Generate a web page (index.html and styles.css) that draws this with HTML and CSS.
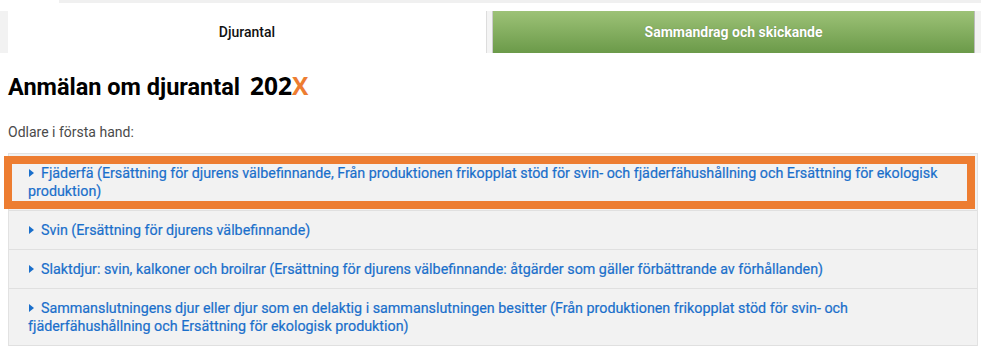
FILE: index.html
```html
<!DOCTYPE html>
<html lang="sv">
<head>
    <meta charset="UTF-8">
    <meta name="viewport" content="width=device-width, initial-scale=1.0">
    <title>Anmälan om djurantal</title>
    <link rel="stylesheet" href="styles.css">
</head>
<body>
    <div class="top-strip"></div>

    <div class="tabs">
        <div class="tab tab-active">Djurantal</div>
        <div class="tab-gap"></div>
        <div class="tab tab-next">Sammandrag och skickande</div>
    </div>

    <div class="content">
        <h1 class="page-title">Anmälan om djurantal <span class="year">202<span class="year-x">X</span></span></h1>

        <p class="intro">Odlare i första hand:</p>

        <div class="accordion">
            <div class="acc-item highlighted">
                <span class="caret"></span>Fjäderfä (Ersättning för djurens välbefinnande, Från produktionen frikopplat stöd för svin- och fjäderfähushållning och Ersättning för ekologisk produktion)
            </div>
            <div class="acc-item">
                <span class="caret"></span>Svin (Ersättning för djurens välbefinnande)
            </div>
            <div class="acc-item">
                <span class="caret"></span>Slaktdjur: svin, kalkoner och broilrar (Ersättning för djurens välbefinnande: åtgärder som gäller förbättrande av förhållanden)
            </div>
            <div class="acc-item">
                <span class="caret"></span>Sammanslutningens djur eller djur som en delaktig i sammanslutningen besitter (Från produktionen frikopplat stöd för svin- och fjäderfähushållning och Ersättning för ekologisk produktion)
            </div>
        </div>
    </div>
</body>
</html>
```

FILE: styles.css
```css
body {
    margin: 0;
    font-family: Roboto, "Liberation Sans", Arial, sans-serif;
    font-size: 14px;
    color: #333;
    background: #fff;
}
.top-strip {
    height: 3px;
    margin-left: 59px;
    background-color: #f0f0f0;
}
.tabs {
    display: flex;
    margin-top: 8px;
    height: 42px;
    background: #fff;
    border-left: 8px solid #f2f2f2;
    border-right: 6px solid #f2f2f2;
}
.tab {
    display: flex;
    align-items: center;
    justify-content: center;
    font-weight: 700;
}
.tab-active {
    width: 478px;
    color: #111;
    font-weight: 500;
    background: #fff;
    border-right: 1px solid #ddd;
}
.tab-gap {
    width: 5px;
    background: #f4f4f4;
    border-right: 1px solid #ccc;
}
.tab-next {
    flex: 1;
    color: #fff;
    background: linear-gradient(to bottom, #9dc277, #6b9a49);
    border-right: 1px solid #bbb;
    text-shadow: 0 0 1px rgba(0, 0, 0, 0.3);
}
.content {
    padding: 0 3px 0 8px;
}
.page-title {
    margin: 18px 0 0;
    font-size: 23.5px;
    font-weight: 700;
    color: #000;
    line-height: 30px;
}
.year {
    margin-left: 4px;
    font-family: "Open Sans", sans-serif;
    font-size: 24.5px;
    font-weight: 700;
}
.year-x {
    color: #ed7d31;
}
.intro {
    margin: 21px 0 0;
    color: #4a4a4a;
    line-height: 18px;
}
.accordion {
    margin-top: 12px;
    border: 1px solid #e2e2e2;
    border-bottom: none;
}
.acc-item {
    position: relative;
    padding: 10px 19px;
    font-size: 14.3px;
    line-height: 18px;
    color: #1a6fcb;
    background-color: #f2f2f2;
    border-bottom: 1px solid #e0e0e0;
    -webkit-text-stroke: 0.2px #1a6fcb;
}
.caret {
    display: inline-block;
    width: 0;
    height: 0;
    margin: 0 7px 1px 1px;
    border-left: 5px solid #1a6fcb;
    border-top: 4px solid transparent;
    border-bottom: 4px solid transparent;
}
/* orange annotation frame around the first row */
.highlighted::after {
    content: "";
    position: absolute;
    left: -5px;
    top: 2px;
    right: 2px;
    bottom: 1px;
    border: 8px solid #ed7d31;
}
```
